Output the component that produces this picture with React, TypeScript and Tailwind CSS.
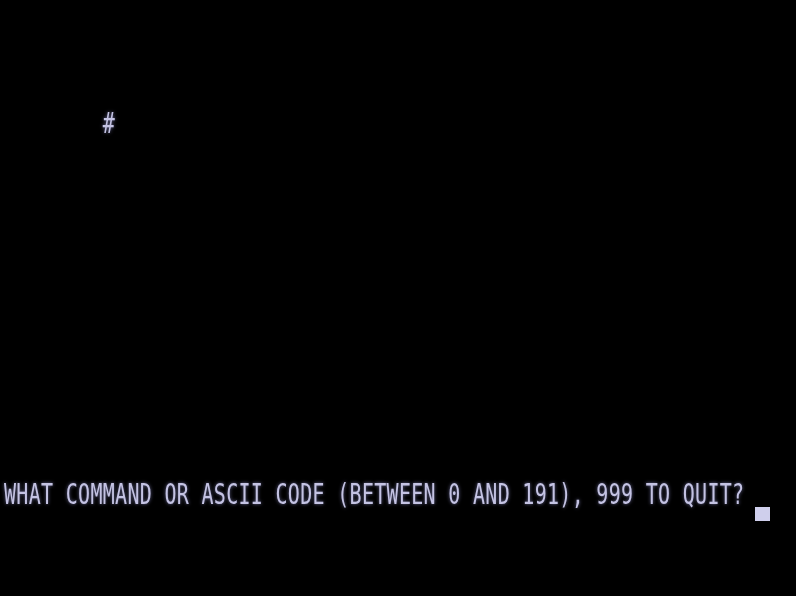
export default function App() {
  const mono = "font-['DejaVu_Sans_Mono','Liberation_Mono',monospace]";
  return (
    <div className="w-[796px] h-[596px] bg-black overflow-hidden pl-[4px] pt-[105px] flex flex-col">
      <div
        className={`${mono} text-[20px] leading-[24px] h-[24px] tracking-[0.3px] whitespace-pre text-[#c4c3e3] origin-top-left scale-y-[1.46] blur-[0.5px] [text-shadow:0_0_3px_rgba(180,180,255,0.6)]`}
      >
        {"        #"}
      </div>
      <div className="flex items-start mt-[348px]">
        <span
          className={`${mono} text-[20px] leading-[24px] h-[24px] tracking-[0.3px] whitespace-pre text-[#c4c3e3] origin-top-left scale-y-[1.44] blur-[0.5px] [text-shadow:0_0_3px_rgba(180,180,255,0.6)]`}
        >
          WHAT COMMAND OR ASCII CODE (BETWEEN 0 AND 191), 999 TO QUIT?
        </span>
        <div className="ml-[11px] mt-[30px] w-[15px] h-[14px] bg-[#cfcfec] blur-[0.4px]" />
      </div>
    </div>
  );
}
